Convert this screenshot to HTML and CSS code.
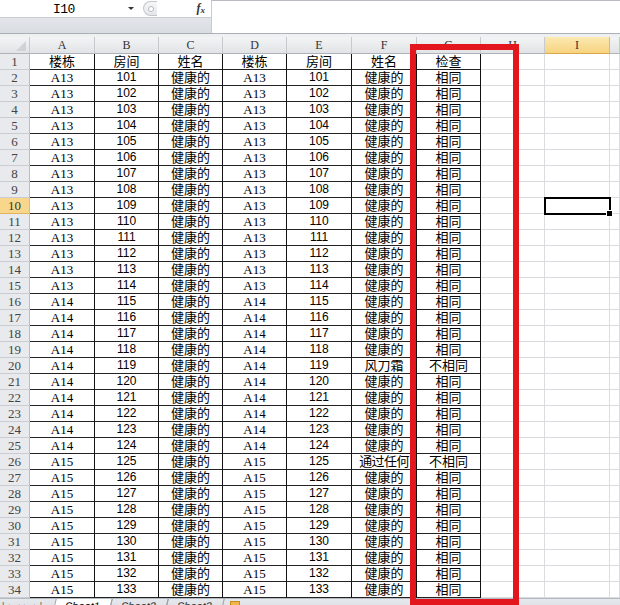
FILE: index.html
```html
<!DOCTYPE html>
<html lang="zh-CN">
<head>
<meta charset="utf-8">
<title>Sheet1</title>
<link rel="stylesheet" href="styles.css">
</head>
<body>
<div class="app">
  <div class="fbar">
    <div class="fleft">
      <div class="nb-row">
        <div class="namebox"><span class="nb-text">I10</span><span class="nb-arrow"></span></div>
        <div class="fx-area"><span class="grip"><span class="grip-dot"></span></span><span class="fx">f<sub>x</sub></span></div>
      </div>
      <div class="band"></div>
    </div>
    <div class="finput"></div>
  </div>
  <div class="sep"></div>
  <table class="grid">
    <colgroup>
      <col class="w30"><col class="w65"><col class="w64"><col class="w64"><col class="w64"><col class="w65"><col class="w65"><col class="w64"><col class="w64"><col class="w65"><col class="w10">
    </colgroup>
    <thead>
      <tr class="hr"><th class="corner"><span class="tri"></span></th><th class="ch">A</th><th class="ch">B</th><th class="ch">C</th><th class="ch">D</th><th class="ch">E</th><th class="ch">F</th><th class="ch">G</th><th class="ch">H</th><th class="ch on">I</th><th class="ch"></th></tr>
    </thead>
    <tbody>
      <tr><th class="rh">1</th><td class="d c">楼栋</td><td class="d c">房间</td><td class="d c">姓名</td><td class="d c">楼栋</td><td class="d c">房间</td><td class="d c">姓名</td><td class="d c">检查</td><td></td><td></td><td></td></tr>
      <tr><th class="rh">2</th><td class="d s">A13</td><td class="d n">101</td><td class="d c">健康的</td><td class="d s">A13</td><td class="d n">101</td><td class="d c">健康的</td><td class="d c">相同</td><td></td><td></td><td></td></tr>
      <tr><th class="rh">3</th><td class="d s">A13</td><td class="d n">102</td><td class="d c">健康的</td><td class="d s">A13</td><td class="d n">102</td><td class="d c">健康的</td><td class="d c">相同</td><td></td><td></td><td></td></tr>
      <tr><th class="rh">4</th><td class="d s">A13</td><td class="d n">103</td><td class="d c">健康的</td><td class="d s">A13</td><td class="d n">103</td><td class="d c">健康的</td><td class="d c">相同</td><td></td><td></td><td></td></tr>
      <tr><th class="rh">5</th><td class="d s">A13</td><td class="d n">104</td><td class="d c">健康的</td><td class="d s">A13</td><td class="d n">104</td><td class="d c">健康的</td><td class="d c">相同</td><td></td><td></td><td></td></tr>
      <tr><th class="rh">6</th><td class="d s">A13</td><td class="d n">105</td><td class="d c">健康的</td><td class="d s">A13</td><td class="d n">105</td><td class="d c">健康的</td><td class="d c">相同</td><td></td><td></td><td></td></tr>
      <tr><th class="rh">7</th><td class="d s">A13</td><td class="d n">106</td><td class="d c">健康的</td><td class="d s">A13</td><td class="d n">106</td><td class="d c">健康的</td><td class="d c">相同</td><td></td><td></td><td></td></tr>
      <tr><th class="rh">8</th><td class="d s">A13</td><td class="d n">107</td><td class="d c">健康的</td><td class="d s">A13</td><td class="d n">107</td><td class="d c">健康的</td><td class="d c">相同</td><td></td><td></td><td></td></tr>
      <tr><th class="rh">9</th><td class="d s">A13</td><td class="d n">108</td><td class="d c">健康的</td><td class="d s">A13</td><td class="d n">108</td><td class="d c">健康的</td><td class="d c">相同</td><td></td><td></td><td></td></tr>
      <tr><th class="rh on">10</th><td class="d s">A13</td><td class="d n">109</td><td class="d c">健康的</td><td class="d s">A13</td><td class="d n">109</td><td class="d c">健康的</td><td class="d c">相同</td><td></td><td></td><td></td></tr>
      <tr><th class="rh">11</th><td class="d s">A13</td><td class="d n">110</td><td class="d c">健康的</td><td class="d s">A13</td><td class="d n">110</td><td class="d c">健康的</td><td class="d c">相同</td><td></td><td></td><td></td></tr>
      <tr><th class="rh">12</th><td class="d s">A13</td><td class="d n">111</td><td class="d c">健康的</td><td class="d s">A13</td><td class="d n">111</td><td class="d c">健康的</td><td class="d c">相同</td><td></td><td></td><td></td></tr>
      <tr><th class="rh">13</th><td class="d s">A13</td><td class="d n">112</td><td class="d c">健康的</td><td class="d s">A13</td><td class="d n">112</td><td class="d c">健康的</td><td class="d c">相同</td><td></td><td></td><td></td></tr>
      <tr><th class="rh">14</th><td class="d s">A13</td><td class="d n">113</td><td class="d c">健康的</td><td class="d s">A13</td><td class="d n">113</td><td class="d c">健康的</td><td class="d c">相同</td><td></td><td></td><td></td></tr>
      <tr><th class="rh">15</th><td class="d s">A13</td><td class="d n">114</td><td class="d c">健康的</td><td class="d s">A13</td><td class="d n">114</td><td class="d c">健康的</td><td class="d c">相同</td><td></td><td></td><td></td></tr>
      <tr><th class="rh">16</th><td class="d s">A14</td><td class="d n">115</td><td class="d c">健康的</td><td class="d s">A14</td><td class="d n">115</td><td class="d c">健康的</td><td class="d c">相同</td><td></td><td></td><td></td></tr>
      <tr><th class="rh">17</th><td class="d s">A14</td><td class="d n">116</td><td class="d c">健康的</td><td class="d s">A14</td><td class="d n">116</td><td class="d c">健康的</td><td class="d c">相同</td><td></td><td></td><td></td></tr>
      <tr><th class="rh">18</th><td class="d s">A14</td><td class="d n">117</td><td class="d c">健康的</td><td class="d s">A14</td><td class="d n">117</td><td class="d c">健康的</td><td class="d c">相同</td><td></td><td></td><td></td></tr>
      <tr><th class="rh">19</th><td class="d s">A14</td><td class="d n">118</td><td class="d c">健康的</td><td class="d s">A14</td><td class="d n">118</td><td class="d c">健康的</td><td class="d c">相同</td><td></td><td></td><td></td></tr>
      <tr><th class="rh">20</th><td class="d s">A14</td><td class="d n">119</td><td class="d c">健康的</td><td class="d s">A14</td><td class="d n">119</td><td class="d c">风刀霜</td><td class="d c">不相同</td><td></td><td></td><td></td></tr>
      <tr><th class="rh">21</th><td class="d s">A14</td><td class="d n">120</td><td class="d c">健康的</td><td class="d s">A14</td><td class="d n">120</td><td class="d c">健康的</td><td class="d c">相同</td><td></td><td></td><td></td></tr>
      <tr><th class="rh">22</th><td class="d s">A14</td><td class="d n">121</td><td class="d c">健康的</td><td class="d s">A14</td><td class="d n">121</td><td class="d c">健康的</td><td class="d c">相同</td><td></td><td></td><td></td></tr>
      <tr><th class="rh">23</th><td class="d s">A14</td><td class="d n">122</td><td class="d c">健康的</td><td class="d s">A14</td><td class="d n">122</td><td class="d c">健康的</td><td class="d c">相同</td><td></td><td></td><td></td></tr>
      <tr><th class="rh">24</th><td class="d s">A14</td><td class="d n">123</td><td class="d c">健康的</td><td class="d s">A14</td><td class="d n">123</td><td class="d c">健康的</td><td class="d c">相同</td><td></td><td></td><td></td></tr>
      <tr><th class="rh">25</th><td class="d s">A14</td><td class="d n">124</td><td class="d c">健康的</td><td class="d s">A14</td><td class="d n">124</td><td class="d c">健康的</td><td class="d c">相同</td><td></td><td></td><td></td></tr>
      <tr><th class="rh">26</th><td class="d s">A15</td><td class="d n">125</td><td class="d c">健康的</td><td class="d s">A15</td><td class="d n">125</td><td class="d c tight">通过任何</td><td class="d c">不相同</td><td></td><td></td><td></td></tr>
      <tr><th class="rh">27</th><td class="d s">A15</td><td class="d n">126</td><td class="d c">健康的</td><td class="d s">A15</td><td class="d n">126</td><td class="d c">健康的</td><td class="d c">相同</td><td></td><td></td><td></td></tr>
      <tr><th class="rh">28</th><td class="d s">A15</td><td class="d n">127</td><td class="d c">健康的</td><td class="d s">A15</td><td class="d n">127</td><td class="d c">健康的</td><td class="d c">相同</td><td></td><td></td><td></td></tr>
      <tr><th class="rh">29</th><td class="d s">A15</td><td class="d n">128</td><td class="d c">健康的</td><td class="d s">A15</td><td class="d n">128</td><td class="d c">健康的</td><td class="d c">相同</td><td></td><td></td><td></td></tr>
      <tr><th class="rh">30</th><td class="d s">A15</td><td class="d n">129</td><td class="d c">健康的</td><td class="d s">A15</td><td class="d n">129</td><td class="d c">健康的</td><td class="d c">相同</td><td></td><td></td><td></td></tr>
      <tr><th class="rh">31</th><td class="d s">A15</td><td class="d n">130</td><td class="d c">健康的</td><td class="d s">A15</td><td class="d n">130</td><td class="d c">健康的</td><td class="d c">相同</td><td></td><td></td><td></td></tr>
      <tr><th class="rh">32</th><td class="d s">A15</td><td class="d n">131</td><td class="d c">健康的</td><td class="d s">A15</td><td class="d n">131</td><td class="d c">健康的</td><td class="d c">相同</td><td></td><td></td><td></td></tr>
      <tr><th class="rh">33</th><td class="d s">A15</td><td class="d n">132</td><td class="d c">健康的</td><td class="d s">A15</td><td class="d n">132</td><td class="d c">健康的</td><td class="d c">相同</td><td></td><td></td><td></td></tr>
      <tr><th class="rh">34</th><td class="d s">A15</td><td class="d n">133</td><td class="d c">健康的</td><td class="d s">A15</td><td class="d n">133</td><td class="d c">健康的</td><td class="d c">相同</td><td></td><td></td><td></td></tr>
    </tbody>
  </table>
  <div class="tabs">
    <span class="nav">|◂ ◂ ▸ ▸|</span>
    <span class="tab active">Sheet1</span>
    <span class="tab">Sheet2</span>
    <span class="tab">Sheet3</span>
    <span class="newtab"></span>
  </div>
  <div class="sel"><span class="handle"></span></div>
  <div class="redbox"></div>
</div>
</body>
</html>
```

FILE: styles.css
```css
html, body {
  margin: 0;
  padding: 0;
  background: #fff;
}
.app {
  position: relative;
  width: 620px;
  height: 605px;
  overflow: hidden;
  font-family: "Liberation Serif", "Noto Sans CJK SC", serif;
  color: #000;
}
.fbar {
  display: flex;
  height: 33px;
}
.fleft {
  width: 211px;
  display: flex;
  flex-direction: column;
  border-right: 1px solid #c7cbd1;
}
.nb-row {
  display: flex;
  height: 17px;
  border-bottom: 1px solid #c9cdd3;
}
.namebox {
  width: 140px;
  display: flex;
  align-items: center;
  background: #fff;
}
.nb-text {
  margin-left: 53px;
  padding-top: 2px;
  font-family: "Liberation Mono", monospace;
  font-size: 13px;
  letter-spacing: -0.5px;
}
.nb-arrow {
  margin-left: auto;
  margin-right: 6px;
  width: 0;
  height: 0;
  border-left: 3px solid transparent;
  border-right: 3px solid transparent;
  border-top: 3px solid #333;
}
.fx-area {
  flex: 1;
  display: flex;
  align-items: center;
  background: #fff;
}
.grip {
  width: 14px;
  height: 15px;
  margin-left: 3px;
  border: 1px solid #c3c7cc;
  border-radius: 8px 0 0 8px;
  border-right: none;
  background: linear-gradient(#f6f7f8, #e4e6e9);
  display: flex;
  align-items: center;
  justify-content: center;
  box-sizing: border-box;
}
.grip-dot {
  width: 4px;
  height: 4px;
  border-radius: 50%;
  border: 1px solid #b5b9be;
  background: #fff;
}
.fx {
  margin-left: auto;
  margin-right: 6px;
  font-family: "Liberation Serif", serif;
  font-style: italic;
  font-weight: bold;
  font-size: 12px;
  color: #333;
}
.fx sub {
  font-size: 9px;
  vertical-align: -1px;
}
.band {
  flex: 1;
  background: linear-gradient(#e2e5e9, #d9dde2);
}
.finput {
  flex: 1;
  background: #fff;
  border-top: 1px solid #b8bcc2;
}
.sep {
  height: 3px;
  border-top: 1px solid #aab0b8;
  background: #eef0f2;
}
.grid {
  table-layout: fixed;
  border-collapse: separate;
  border-spacing: 0;
  width: 620px;
}
.w30 { width: 30px; }
.w64 { width: 64px; }
.w65 { width: 65px; }
.w10 { width: 10px; }
.grid th, .grid td {
  padding: 0;
  height: 15px;
  line-height: 15px;
  border-right: 1px solid #dadcdf;
  border-bottom: 1px solid #dadcdf;
  text-align: center;
  white-space: nowrap;
  overflow: hidden;
  font-weight: normal;
}
.grid tbody tr {
  height: 16px;
}
.hr {
  height: 17px;
}
.grid .ch, .grid .corner {
  height: 16px;
  line-height: 16px;
  background: linear-gradient(#f3f4f5, #e1e3e6);
  border-right: 1px solid #c6c9cd;
  border-bottom: 1px solid #aeb3b9;
  font-family: "Liberation Serif", serif;
  font-size: 12px;
  color: #333;
}
.corner {
  position: relative;
}
.tri {
  position: absolute;
  right: 3px;
  bottom: 2px;
  width: 0;
  height: 0;
  border-left: 10px solid transparent;
  border-bottom: 10px solid #cfd2d6;
}
.grid .ch.on {
  background: linear-gradient(#fce9b2, #f7d37f);
  border-right: 1px solid #e2b95d;
  border-bottom: 1px solid #d9a94a;
}
.grid .rh {
  background: #e8eaed;
  border-right: 1px solid #b9bec5;
  border-bottom: 1px solid #c9ccd0;
  font-family: "Liberation Serif", serif;
  font-size: 13px;
  color: #444;
}
.grid .rh.on {
  background: #f8d78d;
  border-bottom: 1px solid #e0b457;
  color: #333;
}
.grid .d {
  border-right: 1px solid #111;
  border-bottom: 1px solid #222;
}
.s {
  font-family: "Liberation Serif", serif;
  font-size: 13px;
}
.n {
  font-family: "Liberation Sans", sans-serif;
  font-size: 12px;
}
.c {
  font-family: "Liberation Sans", "Noto Sans CJK SC", sans-serif;
  font-size: 13px;
}
.tight {
  letter-spacing: -0.6px;
}
.tabs {
  display: flex;
  align-items: flex-start;
  height: 20px;
  background: linear-gradient(#e5e8ec, #d6dae0);
  border-top: 1px solid #b5bac1;
  font-family: "Liberation Sans", sans-serif;
  font-size: 11px;
  color: #333;
}
.nav {
  width: 52px;
  padding-left: 2px;
  letter-spacing: 1px;
  font-size: 9px;
  line-height: 14px;
  color: #555;
}
.tab {
  padding: 0 10px;
  line-height: 14px;
  border-left: 1px solid #9aa0a8;
  border-right: 1px solid #9aa0a8;
  margin-right: -1px;
  transform: skewX(-14deg);
}
.tab.active {
  background: #fff;
  color: #000;
}
.newtab {
  width: 10px;
  height: 10px;
  margin: 2px 0 0 8px;
  background: #f1b54a;
  border: 1px solid #c98a20;
  box-sizing: border-box;
}
.sel {
  position: absolute;
  left: 544px;
  top: 197px;
  width: 67px;
  height: 18px;
  border: 2px solid #000;
  box-sizing: border-box;
}
.handle {
  position: absolute;
  right: -4px;
  bottom: -4px;
  width: 5px;
  height: 5px;
  background: #000;
  border: 1px solid #fff;
}
.redbox {
  position: absolute;
  left: 410px;
  top: 44px;
  width: 109px;
  height: 561px;
  border: 6px solid #e3161d;
  box-sizing: border-box;
}
```
